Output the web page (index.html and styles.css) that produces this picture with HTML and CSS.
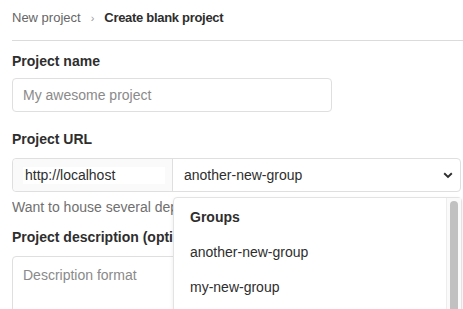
FILE: index.html
```html
<!DOCTYPE html>
<html lang="en">
<head>
    <meta charset="UTF-8">
    <title>Create blank project</title>
    <link rel="stylesheet" href="styles.css">
</head>
<body>
    <div class="page">
        <nav class="breadcrumb">
            <span class="crumb">New project</span>
            <span class="sep">&rsaquo;</span>
            <span class="crumb current">Create blank project</span>
        </nav>
        <form class="project-form">
            <div class="form-group">
                <label class="label">Project name</label>
                <div class="text-input name-input">My awesome project</div>
            </div>
            <div class="form-group">
                <label class="label url-label">Project URL</label>
                <div class="input-group">
                    <div class="prefix"><span class="prefix-text">http://localhost</span></div>
                    <div class="select">
                        <span>another-new-group</span>
                        <svg class="chevron" width="10" height="7" viewBox="0 0 10 7">
                            <path d="M1.2 1.3 L5 5 L8.8 1.3" fill="none" stroke="#2e2e2e" stroke-width="1.9"/>
                        </svg>
                    </div>
                    <div class="dropdown">
                        <div class="dropdown-list">
                            <div class="dropdown-header">Groups</div>
                            <div class="dropdown-item">another-new-group</div>
                            <div class="dropdown-item">my-new-group</div>
                        </div>
                        <div class="scrollbar">
                            <div class="thumb"></div>
                        </div>
                    </div>
                </div>
                <p class="help">Want to house several dependent projects under the same namespace? Create a group.</p>
            </div>
            <div class="form-group">
                <label class="label desc-label">Project description (optional)</label>
                <div class="text-input textarea">Description format</div>
            </div>
        </form>
    </div>
</body>
</html>
```

FILE: styles.css
```css
body {
    font-family: 'Liberation Sans', Arial, sans-serif;
    color: #2e2e2e;
    background-color: #fff;
    margin: 0;
    padding: 0;
    overflow: hidden;
}

.page {
    padding: 0 2px 0 12px;
}

/* Breadcrumb */
.breadcrumb {
    display: flex;
    align-items: center;
    height: 41px;
    padding-bottom: 5px;
    box-sizing: border-box;
    border-bottom: 1px solid #dbdbdb;
    margin-right: -2px;
    font-size: 13px;
}

.crumb {
    color: #666;
}

.crumb.current {
    color: #2e2e2e;
    font-weight: bold;
    letter-spacing: -0.3px;
}

.sep {
    color: #999;
    font-size: 11px;
    margin: 0 10px;
}

/* Form */
.form-group {
    position: relative;
}

.label {
    display: block;
    font-size: 14px;
    font-weight: bold;
    line-height: 20px;
    margin-top: 10px;
    margin-bottom: 7px;
}

.url-label {
    margin-top: 17px;
    margin-bottom: 9px;
}

.desc-label {
    margin-top: 10px;
    margin-bottom: 9px;
}

.text-input {
    box-sizing: border-box;
    height: 34px;
    border: 1px solid #dfdfdf;
    border-radius: 4px;
    padding: 0 10px;
    font-size: 14px;
    line-height: 32px;
    color: #8a8a8a;
}

.name-input {
    width: 320px;
}

.textarea {
    height: 90px;
    padding-top: 2px;
}

/* URL input group */
.input-group {
    display: flex;
    height: 34px;
    box-sizing: border-box;
    border: 1px solid #dfdfdf;
    border-radius: 4px;
    font-size: 14px;
}

.prefix {
    width: 160px;
    box-sizing: border-box;
    display: flex;
    align-items: center;
    padding-left: 10px;
    background-color: #fafafa;
    border-right: 1px solid #dfdfdf;
    border-radius: 4px 0 0 4px;
}

.prefix-text {
    background-color: #fff;
    width: 140px;
    padding-left: 2px;
    line-height: 17px;
}

.select {
    flex: 1;
    display: flex;
    align-items: center;
    justify-content: space-between;
    padding: 0 7px 0 11px;
}

.chevron {
    display: block;
}

.help {
    margin: 5px 0 0;
    font-size: 14px;
    line-height: 20px;
    color: #707070;
    white-space: nowrap;
    overflow: hidden;
}

.help + * {
    margin-top: 0;
}

/* Dropdown menu over the page */
.dropdown {
    position: absolute;
    top: 68px;
    left: 161px;
    width: 287px;
    height: 130px;
    display: flex;
    background-color: #fff;
    border: 1px solid #e3e3e3;
    border-radius: 4px 4px 0 0;
    box-shadow: 0 2px 4px rgba(0, 0, 0, 0.08);
    z-index: 2;
}

.dropdown-list {
    flex: 1;
    padding-left: 16px;
    font-size: 14px;
}

.dropdown-header {
    font-weight: bold;
    line-height: 20px;
    margin-top: 9px;
}

.dropdown-item {
    line-height: 20px;
    margin-top: 15px;
}

.dropdown-item:first-of-type {
    margin-top: 17px;
}

.scrollbar {
    width: 15px;
    border-left: 1px solid #ededed;
    background-color: #fafafa;
    padding-top: 3px;
    box-sizing: border-box;
    display: flex;
    justify-content: center;
}

.thumb {
    width: 8px;
    height: 200px;
    border-radius: 4px;
    background-color: #c1c1c1;
}
```
